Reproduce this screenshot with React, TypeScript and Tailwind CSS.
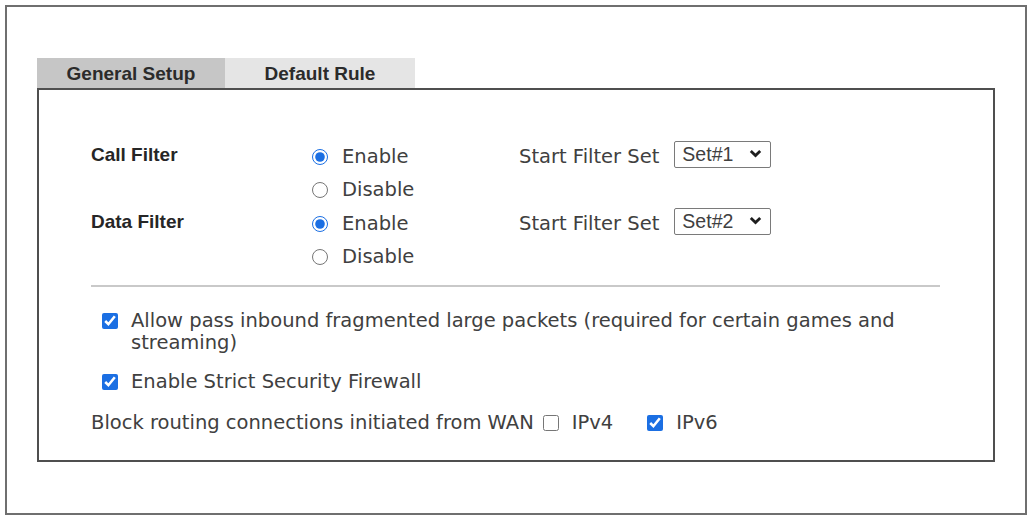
import { useState } from "react";

const textFont = "font-['DejaVu_Sans',Verdana,sans-serif]";
const boldFont = "font-['Liberation_Sans',Arial,sans-serif] font-bold";

type FilterRowProps = {
  label: string;
  name: string;
  setValue: string;
};

const FilterRow = ({ label, name, setValue }: FilterRowProps) => {
  const [enabled, setEnabled] = useState<boolean>(true);
  const [filterSet, setFilterSet] = useState<string>(setValue);

  return (
    <div className="grid grid-cols-[221px_207px_auto]">
      <div className={`${boldFont} text-[19px] text-[#262626] h-[33px] flex items-center -mt-[1px]`}>
        {label}
      </div>
      <div className="flex flex-col">
        <label className="flex items-center h-[33px] gap-[14px] cursor-pointer">
          <input
            type="radio"
            name={name}
            checked={enabled}
            onChange={() => setEnabled(true)}
            className="w-[16px] h-[16px] accent-[#1b6fe3]"
          />
          <span>Enable</span>
        </label>
        <label className="flex items-center h-[34px] gap-[14px] cursor-pointer">
          <input
            type="radio"
            name={name}
            checked={!enabled}
            onChange={() => setEnabled(false)}
            className="w-[16px] h-[16px] accent-[#1b6fe3]"
          />
          <span>Disable</span>
        </label>
      </div>
      <div className="flex items-start">
        <div className="flex items-center h-[33px]">
          <span>Start Filter Set</span>
          <div className="relative ml-[15px] -mt-[3px]">
            <select
              value={filterSet}
              onChange={(e) => setFilterSet(e.target.value)}
              className="appearance-none w-[97px] h-[27px] pl-[7px] border border-[#7a7a7a] rounded-[2px] bg-white font-['Liberation_Sans',Arial,sans-serif] text-[19.5px] leading-[25px] text-[#404040]"
            >
              {["Set#1", "Set#2", "Set#3", "Set#4", "Set#5", "Set#6"].map((s) => (
                <option key={s} value={s}>
                  {s}
                </option>
              ))}
            </select>
            <svg
              className="absolute right-[9px] top-[9px] pointer-events-none"
              width="13"
              height="9"
              viewBox="0 0 13 9"
            >
              <path d="M1.8 2 L6.5 6.6 L11.2 2" fill="none" stroke="#1e1e1e" strokeWidth="2.8" />
            </svg>
          </div>
        </div>
      </div>
    </div>
  );
};

const App = () => {
  const [tab, setTab] = useState<string>("general");
  const [fragmented, setFragmented] = useState<boolean>(true);
  const [strict, setStrict] = useState<boolean>(true);
  const [ipv4, setIpv4] = useState<boolean>(false);
  const [ipv6, setIpv6] = useState<boolean>(true);

  const checkboxClass = "w-[16px] h-[16px] shrink-0 accent-[#1b6fe3]";

  return (
    <div className="w-[1031px] h-[518px] bg-white pt-[5px] pl-[5px]">
      <div className="w-[1022px] h-[510px] border-2 border-[#6f6f6f] pt-[51px] pl-[30px]">
        {/* tabs */}
        <div className={`flex h-[30px] ${boldFont} text-[19px] text-[#2b2b2b]`}>
          <button
            type="button"
            onClick={() => setTab("general")}
            className="w-[188px] h-full bg-[#c6c6c6] flex items-center justify-center pt-[2px]"
          >
            General Setup
          </button>
          <button
            type="button"
            onClick={() => setTab("default")}
            className="w-[190px] h-full bg-[#e5e5e5] flex items-center justify-center pt-[2px]"
          >
            Default Rule
          </button>
        </div>

        {/* panel */}
        <div
          className={`w-[958px] h-[374px] border-2 border-[#4f4f4f] pt-[50px] pl-[52px] ${textFont} text-[19.5px] text-[#404040]`}
        >
          {tab === "general" && (
            <>
              <FilterRow label="Call Filter" name="call" setValue="Set#1" />
              <FilterRow label="Data Filter" name="data" setValue="Set#2" />

              <div className="w-[849px] h-[2px] bg-[#c9c9c9] mt-[11px]" />

              <label className="flex items-start gap-[13px] pl-[11px] mt-[23px] leading-[22px] w-[849px] cursor-pointer">
                <input
                  type="checkbox"
                  checked={fragmented}
                  onChange={() => setFragmented(!fragmented)}
                  className={`${checkboxClass} mt-[3px]`}
                />
                <span className="w-[805px]">
                  Allow pass inbound fragmented large packets (required for certain games and streaming)
                </span>
              </label>

              <label className="flex items-center gap-[13px] pl-[11px] mt-[17px] h-[22px] cursor-pointer">
                <input
                  type="checkbox"
                  checked={strict}
                  onChange={() => setStrict(!strict)}
                  className={checkboxClass}
                />
                <span>Enable Strict Security Firewall</span>
              </label>

              <div className="flex items-center mt-[19px] h-[22px]">
                <span>Block routing connections initiated from WAN</span>
                <label className="flex items-center gap-[13px] ml-[9px] cursor-pointer">
                  <input
                    type="checkbox"
                    checked={ipv4}
                    onChange={() => setIpv4(!ipv4)}
                    className={checkboxClass}
                  />
                  <span>IPv4</span>
                </label>
                <label className="flex items-center gap-[13px] ml-[34px] cursor-pointer">
                  <input
                    type="checkbox"
                    checked={ipv6}
                    onChange={() => setIpv6(!ipv6)}
                    className={checkboxClass}
                  />
                  <span>IPv6</span>
                </label>
              </div>
            </>
          )}
        </div>
      </div>
    </div>
  );
};

export default App;
